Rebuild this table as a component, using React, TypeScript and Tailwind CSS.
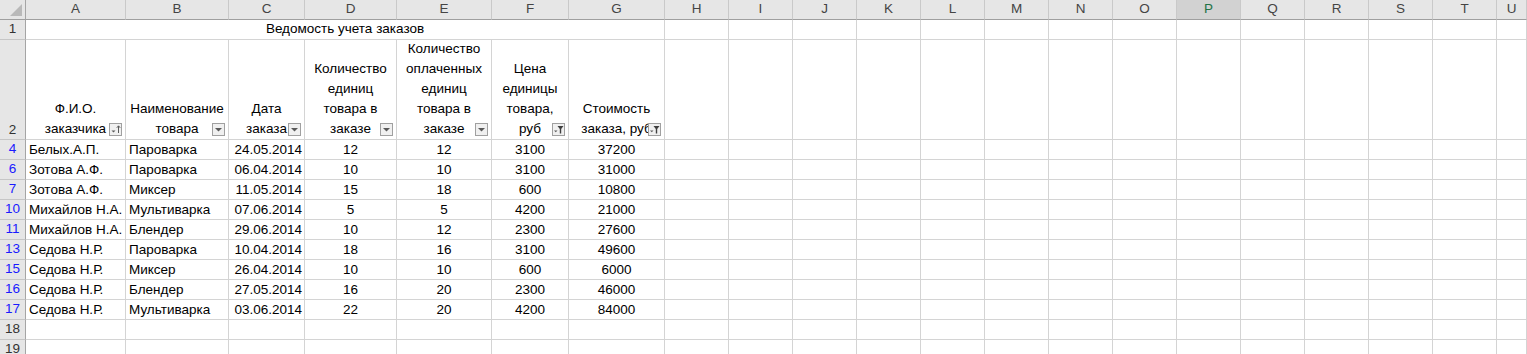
import React from 'react';

type Row = [number, string, string, string, number, number, number, number];

const rows: Row[] = [
  [4, 'Белых.А.П.', 'Пароварка', '24.05.2014', 12, 12, 3100, 37200],
  [6, 'Зотова А.Ф.', 'Пароварка', '06.04.2014', 10, 10, 3100, 31000],
  [7, 'Зотова А.Ф.', 'Миксер', '11.05.2014', 15, 18, 600, 10800],
  [10, 'Михайлов Н.А.', 'Мультиварка', '07.06.2014', 5, 5, 4200, 21000],
  [11, 'Михайлов Н.А.', 'Блендер', '29.06.2014', 10, 12, 2300, 27600],
  [13, 'Седова Н.Р.', 'Пароварка', '10.04.2014', 18, 16, 3100, 49600],
  [15, 'Седова Н.Р.', 'Миксер', '26.04.2014', 10, 10, 600, 6000],
  [16, 'Седова Н.Р.', 'Блендер', '27.05.2014', 16, 20, 2300, 46000],
  [17, 'Седова Н.Р.', 'Мультиварка', '03.06.2014', 22, 20, 4200, 84000],
];

const letters = ['A', 'B', 'C', 'D', 'E', 'F', 'G', 'H', 'I', 'J', 'K', 'L', 'M', 'N', 'O', 'P', 'Q', 'R', 'S', 'T', 'U'];
const emptyCols = 14; // H..U

type FilterKind = 'plain' | 'sorted' | 'filtered';

function FilterButton({ kind }: { kind: FilterKind }) {
  return (
    <svg className="absolute right-[3px] bottom-[3px]" width="13" height="13" viewBox="0 0 13 13">
      <rect x="0.5" y="0.5" width="12" height="12" fill="#f0f0f0" stroke="#a0a0a0" />
      {kind === 'plain' && <path d="M3 5h7l-3.5 3.5z" fill="#595959" />}
      {kind === 'sorted' && (
        <>
          <path d="M2.5 7.5h4l-2 2z" fill="#595959" />
          <path d="M9.5 3v7" stroke="#595959" strokeWidth="1" />
          <path d="M7.8 4.8L9.5 2.8l1.7 2" fill="none" stroke="#595959" strokeWidth="1" />
        </>
      )}
      {kind === 'filtered' && (
        <>
          <path d="M2 7.5h3.5l-1.75 1.75z" fill="#595959" />
          <path d="M5.5 3h6l-2.3 3v4.5h-1.4V6z" fill="#3f3f3f" />
        </>
      )}
    </svg>
  );
}

function HeaderCell({ lines, filter }: { lines: string[]; filter: FilterKind }) {
  return (
    <div className="relative h-[100px] border-r border-b border-[#d4d4d4] flex flex-col justify-end items-center overflow-hidden">
      {lines.map((l) => (
        <div key={l} className="leading-[20px] h-[20px] whitespace-nowrap">{l}</div>
      ))}
      <FilterButton kind={filter} />
    </div>
  );
}

function RowHead({ n, blue, tall }: { n: number; blue?: boolean; tall?: boolean }) {
  return (
    <div
      className={`${tall ? 'h-[100px] items-end' : 'h-[20px] items-center'} flex justify-center bg-[#e6e6e6] border-r border-b border-r-[#a5a5a5] border-b-[#c6c6c6] ${
        blue ? 'text-[#1a1aff]' : 'text-[#333]'
      }`}
    >
      <span className={tall ? 'leading-[19px]' : ''}>{n}</span>
    </div>
  );
}

function Empty({ tall }: { tall?: boolean }) {
  return <div className={`${tall ? 'h-[100px]' : 'h-[20px]'} border-r border-b border-[#d4d4d4]`} />;
}

export default function App() {
  const cell = 'h-[20px] border-r border-b border-[#d4d4d4] leading-[19px] whitespace-nowrap overflow-hidden';

  return (
    <div className="w-[1527px] h-[354px] overflow-hidden bg-white font-['Liberation_Sans',Arial,sans-serif] text-[13.5px] text-black">
      <div className="grid grid-cols-[26px_100px_103px_76px_92px_95px_77px_96px_repeat(13,64px)_1fr]">
        {/* column letters */}
        <div className="h-[20px] bg-[#e6e6e6] border-r border-b border-r-[#a5a5a5] border-b-[#9f9f9f] relative">
          <svg className="absolute right-[3px] bottom-[3px]" width="12" height="12" viewBox="0 0 12 12">
            <path d="M12 0V12H0z" fill="#b9b9b9" />
          </svg>
        </div>
        {letters.map((l) => (
          <div
            key={l}
            className={`h-[20px] flex items-center justify-center border-r border-b border-r-[#c9c9c9] border-b-[#9f9f9f] ${
              l === 'P' ? 'bg-[#d2d2d2] text-[#217346]' : 'bg-[#e6e6e6] text-[#444]'
            }`}
          >
            {l}
          </div>
        ))}

        {/* row 1: title */}
        <RowHead n={1} />
        <div className="col-span-7 h-[20px] border-r border-b border-[#d4d4d4] flex items-center justify-center">
          Ведомость учета заказов
        </div>
        {Array.from({ length: emptyCols }).map((_, i) => (
          <Empty key={`r1-${i}`} />
        ))}

        {/* row 2: table headers */}
        <RowHead n={2} tall />
        <HeaderCell lines={['Ф.И.О.', 'заказчика']} filter="sorted" />
        <HeaderCell lines={['Наименование', 'товара']} filter="plain" />
        <HeaderCell lines={['Дата', 'заказа']} filter="plain" />
        <HeaderCell lines={['Количество', 'единиц', 'товара в', 'заказе']} filter="plain" />
        <HeaderCell lines={['Количество', 'оплаченных', 'единиц', 'товара в', 'заказе']} filter="plain" />
        <HeaderCell lines={['Цена', 'единицы', 'товара,', 'руб']} filter="filtered" />
        <HeaderCell lines={['Стоимость', 'заказа, руб']} filter="filtered" />
        {Array.from({ length: emptyCols }).map((_, i) => (
          <Empty key={`r2-${i}`} tall />
        ))}

        {/* data rows */}
        {rows.map(([n, name, product, date, qty, paid, price, total]) => (
          <React.Fragment key={n}>
            <RowHead n={n} blue />
            <div className={`${cell} pl-[3px]`}>{name}</div>
            <div className={`${cell} pl-[3px]`}>{product}</div>
            <div className={`${cell} text-right pr-[2px]`}>{date}</div>
            <div className={`${cell} text-center`}>{qty}</div>
            <div className={`${cell} text-center`}>{paid}</div>
            <div className={`${cell} text-center`}>{price}</div>
            <div className={`${cell} text-center`}>{total}</div>
            {Array.from({ length: emptyCols }).map((_, i) => (
              <Empty key={`${n}-${i}`} />
            ))}
          </React.Fragment>
        ))}

        {/* trailing empty rows */}
        {[18, 19].map((n) => (
          <React.Fragment key={n}>
            <RowHead n={n} />
            {Array.from({ length: 7 + emptyCols }).map((_, i) => (
              <Empty key={`${n}-${i}`} />
            ))}
          </React.Fragment>
        ))}
      </div>
    </div>
  );
}
